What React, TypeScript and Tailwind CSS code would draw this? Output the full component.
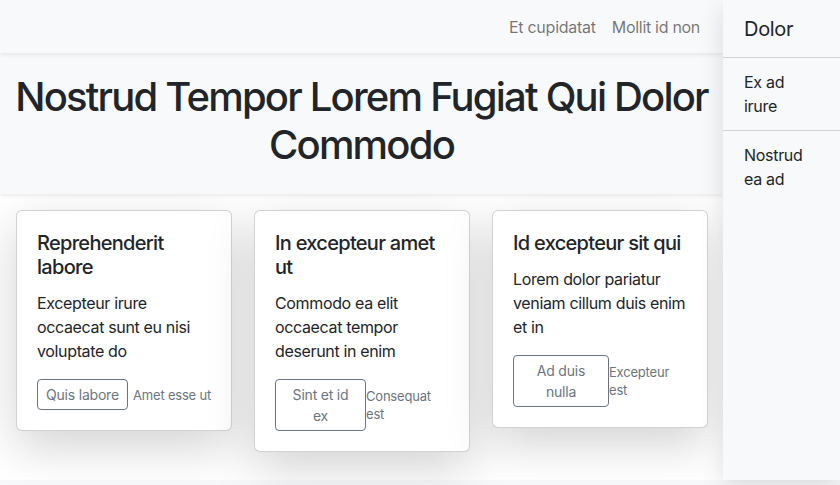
import React from "react";

const cards = [
  {
    title: "Reprehenderit labore",
    text: "Excepteur irure occaecat sunt eu nisi voluptate do",
    btn: "Quis labore",
    link: "Amet esse ut",
    btnW: "",
  },
  {
    title: "In excepteur amet ut",
    text: "Commodo ea elit occaecat tempor deserunt in enim",
    btn: "Sint et id ex",
    link: "Consequat est",
    btnW: "w-[91px] shrink-0",
  },
  {
    title: "Id excepteur sit qui",
    text: "Lorem dolor pariatur veniam cillum duis enim et in",
    btn: "Ad duis nulla",
    link: "Excepteur est",
    btnW: "w-[96px] shrink-0",
  },
];

export default function App() {
  return (
    <div className="font-['Inter','Noto_Sans',sans-serif] text-[#212529] bg-[#f8f9fa] min-h-[485px]">
      <div className="flex h-[480px]">
        <main className="flex-1 min-w-0 flex flex-col">
          <nav className="relative z-[2] h-[53px] bg-[#f8f9fa] shadow-[0_2px_4px_rgba(0,0,0,0.075)] flex items-center justify-end pr-[15px]">
            <a className="px-2 text-[16px] leading-6 tracking-[-0.25px] text-[rgba(0,0,0,0.55)]">Et cupidatat</a>
            <a className="px-2 text-[16px] leading-6 tracking-[-0.3px] text-[rgba(0,0,0,0.55)]">Mollit id non</a>
          </nav>
          <header className="relative z-[1] bg-[#f8f9fa] pt-[20px] pb-[25px] shadow-[0_2px_4px_rgba(0,0,0,0.075)]">
            <h1 className="text-center text-[40px] leading-[48px] font-medium tracking-[-1.8px]">
              Nostrud Tempor Lorem Fugiat Qui Dolor Commodo
            </h1>
          </header>
          <section className="flex-1 bg-white pt-4 px-4 flex items-start gap-[22px]">
            {cards.map((c) => (
              <div
                key={c.title}
                className="w-[216px] shrink-0 bg-white border border-[rgba(0,0,0,0.175)] rounded-[6px] shadow-[0_16px_48px_rgba(0,0,0,0.175)] p-5"
              >
                <h5 className="text-[20px] leading-6 font-medium mb-3 tracking-[-0.7px]">{c.title}</h5>
                <p className="text-[16px] leading-6 mb-4 tracking-[-0.35px]">{c.text}</p>
                <div className="flex items-center justify-between">
                  <button
                    className={`${c.btnW} border border-[#6c757d] text-[#6c757d] rounded-[4px] px-2 py-1 text-[14px] leading-[21px] tracking-[-0.2px] text-center`}
                  >
                    {c.btn}
                  </button>
                  <small className="text-[13px] leading-[18px] tracking-[-0.2px] text-[#6c757d] min-w-0">{c.link}</small>
                </div>
              </div>
            ))}
          </section>
        </main>
        <aside className="relative z-[3] w-[117px] shrink-0 bg-[#f8f9fa] shadow-[0_8px_24px_rgba(0,0,0,0.12)]">
          <div className="pl-[21px] pt-[13px] pb-[12px] text-[20px] leading-8 border-b border-[#d0d1d2] tracking-[-0.3px]">Dolor</div>
          <div className="pl-[21px] pr-6 py-3 text-[16px] leading-6 border-b border-[#d0d1d2] tracking-[-0.3px]">Ex ad irure</div>
          <div className="pl-[21px] pr-6 py-3 text-[16px] leading-6 tracking-[-0.3px]">Nostrud ea ad</div>
        </aside>
      </div>
    </div>
  );
}
